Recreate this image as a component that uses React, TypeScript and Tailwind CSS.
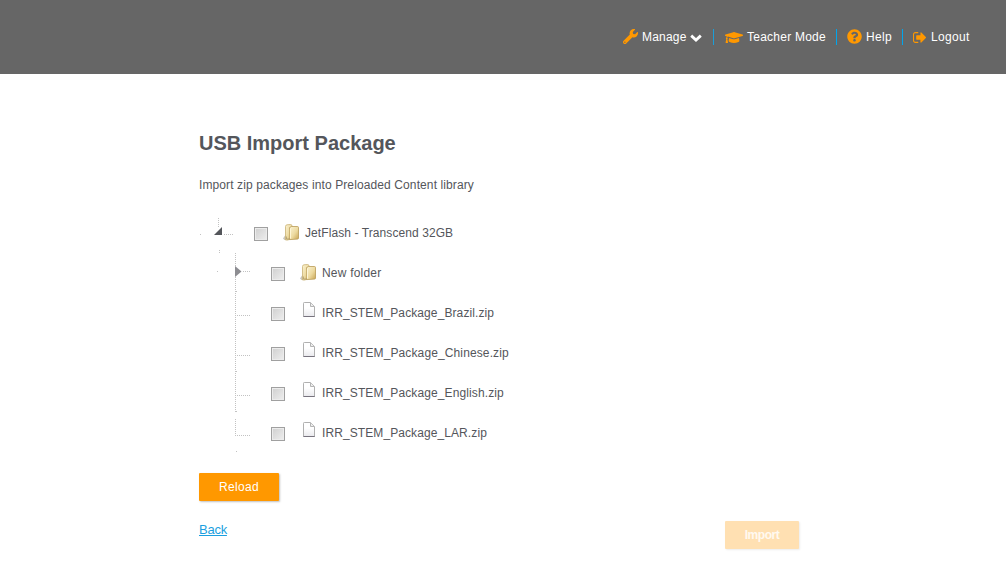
import React from 'react';
import { FaWrench, FaGraduationCap, FaQuestionCircle } from 'react-icons/fa';

type Kind = 'root' | 'folder' | 'file' | 'last';

const rows: { label: string; kind: Kind; tracking: string }[] = [
  { label: 'JetFlash - Transcend 32GB', kind: 'root', tracking: 'tracking-[0.085px]' },
  { label: 'New folder', kind: 'folder', tracking: 'tracking-[0.2px]' },
  { label: 'IRR_STEM_Package_Brazil.zip', kind: 'file', tracking: 'tracking-[0.1px]' },
  { label: 'IRR_STEM_Package_Chinese.zip', kind: 'file', tracking: 'tracking-[0.12px]' },
  { label: 'IRR_STEM_Package_English.zip', kind: 'file', tracking: 'tracking-[0.11px]' },
  { label: 'IRR_STEM_Package_LAR.zip', kind: 'last', tracking: 'tracking-[0.09px]' },
];

function SignOut() {
  return (
    <svg viewBox="0 128 1568 1536" preserveAspectRatio="none" className="h-[13px] w-[13px] shrink-0" fill="currentColor">
      <path d="M640 1440q0 4 1 20t.5 26.5-3 23.5-10 19.5-20.5 6.5h-320q-119 0-203.5-84.5t-84.5-203.5v-704q0-119 84.5-203.5t203.5-84.5h320q13 0 22.5 9.5t9.5 22.5q0 4 1 20t.5 26.5-3 23.5-10 19.5-20.5 6.5h-320q-66 0-113 47t-47 113v704q0 66 47 113t113 47h312l11.5 1 11.5 3 8 5.5 7 9 2 13.5zm928-544q0 26-19 45l-544 544q-19 19-45 19t-45-19-19-45v-288h-448q-26 0-45-19t-19-45v-384q0-26 19-45t45-19h448v-288q0-26 19-45t45-19 45 19l544 544q19 19 19 45z" />
    </svg>
  );
}

function Chevron() {
  return (
    <svg width="12" height="8" viewBox="0 0 12 8" className="ml-[3px] mt-px shrink-0" fill="none">
      <path d="M1.2 1.6L6 6l4.8-4.4" stroke="#fff" strokeWidth="2.8" />
    </svg>
  );
}

function Connector({ kind }: { kind: Kind }) {
  const dots = { stroke: '#c2c2c2', strokeWidth: 1, strokeDasharray: '1 1' };
  return (
    <svg width="55" height="40" viewBox="0 0 55 40" className="shrink-0" fill="none" shapeRendering="crispEdges">
      {kind === 'root' && (
        <>
          <path d="M19.5 5v10M1 21.5h1M25 21.5h9M20.5 37v3" {...dots} />
          <path d="M23 14v8h-8z" fill="#54565b" shapeRendering="auto" />
        </>
      )}
      {kind === 'folder' && (
        <>
          <path d="M19.5 0v40M1 18.5h1M27 18.5h8M20.5 38v1" {...dots} />
          <path d="M19 13l6.5 5.5L19 24z" fill="#8d8d92" shapeRendering="auto" />
        </>
      )}
      {kind === 'file' && <path d="M19.5 0v40M21 22.5h14M20.5 38v1" {...dots} />}
      {kind === 'last' && <path d="M19.5 6v16M19 22.5h16M20.5 38v1" {...dots} />}
    </svg>
  );
}

function Folder() {
  return (
    <svg width="16" height="17" viewBox="0 0 16 17" className="mb-[2px] ml-[-1px]">
      <defs>
        <linearGradient id="gold" x1="0" y1="0" x2="1" y2="1">
          <stop offset="0" stopColor="#fbf3d3" />
          <stop offset="0.55" stopColor="#eddaa0" />
          <stop offset="1" stopColor="#c8a454" />
        </linearGradient>
      </defs>
      <path d="M0 14.5l2-3h2v4.5H1.5z" fill="#c9c6bd" />
      <path d="M2.5 2.5Q2.5 1 4 .8L7.5.5Q9 .5 9 2v12l-4 2H2.5z" fill="url(#gold)" stroke="#c9b173" strokeWidth=".8" />
      <path d="M6.5 3.6l2-1.1h6q1 0 1 1.2v10.4q0 .9-1 1l-8 .5z" fill="url(#gold)" stroke="#b99a55" strokeWidth=".8" />
      <path d="M7.4 4.5v10" stroke="#fff8dc" />
      <path d="M3.5 12.5v2.5h3" fill="none" stroke="#9a8a60" strokeWidth=".6" />
    </svg>
  );
}

function Page() {
  return (
    <svg width="13" height="16" viewBox="0 0 13 16" className="mb-[6px] ml-[2px]">
      <defs>
        <linearGradient id="paper" x1="0" y1="0" x2="0" y2="1">
          <stop offset=".4" stopColor="#fff" />
          <stop offset="1" stopColor="#e9e9ed" />
        </linearGradient>
      </defs>
      <path d="M.5 1.3Q.5.5 1.3.5H7.5L11.5 4.5V14.5H.5z" fill="url(#paper)" stroke="#b0b0b0" />
      <path d="M7.5.8v3.7h3.7" fill="#eee" stroke="#b5b5b5" />
      <path d="M.5 14.5h11.2" stroke="#77737e" />
    </svg>
  );
}

export default function App() {
  return (
    <div className="flex h-[588px] w-[1006px] flex-col overflow-hidden bg-white font-['Liberation_Sans',Arial,sans-serif] text-[12px] text-[#54565b]">
      <header className="flex h-[74px] shrink-0 bg-[#666] pl-[623px] text-white">
        <nav className="flex h-[74px] items-center">
          <a className="flex w-[90px] items-center">
            <FaWrench className="mb-px mr-1 size-[15px] shrink-0 text-[#ff9800]" />
            <span className="tracking-[0.2px]">Manage</span>
            <Chevron />
          </a>
          <a className="flex h-4 w-[123px] items-center border-l border-[#1b9fd9] pl-[11px]">
            <FaGraduationCap className="mr-1 h-[15px] w-[18px] shrink-0 text-[#ff9800]" />
            <span className="whitespace-nowrap tracking-[0.24px]">Teacher Mode</span>
          </a>
          <a className="flex h-4 w-[66px] items-center border-l border-[#00a5ec] pl-[10px]">
            <FaQuestionCircle className="mb-[2px] mr-1 size-[15px] shrink-0 text-[#ff9800]" />
            <span className="tracking-[0.3px]">Help</span>
          </a>
          <a className="flex h-4 items-center border-l border-[#00a5ec] pl-[10px]">
            <span className="mr-[5px] text-[#ff9800]"><SignOut /></span>
            <span className="tracking-[0.35px]">Logout</span>
          </a>
        </nav>
      </header>
      <main className="ml-[199px] flex w-[600px] flex-col pt-[57px]">
        <h1 className="h-6 text-[20px] font-bold leading-6">USB Import Package</h1>
        <p className="mt-[22px] h-4 leading-4 tracking-[0.11px]">Import zip packages into Preloaded Content library</p>
        <ul className="mt-5">
          {rows.map(({ label, kind, tracking }) => (
            <li key={label} className={kind === 'root' ? 'flex h-10 items-center' : 'ml-[17px] flex h-10 items-center'}>
              <Connector kind={kind} />
              <span className="mr-4 mt-[2px] flex size-[14px] shrink-0 border border-[#a0a0a0] bg-[#ececec] p-px">
                <span className="flex-1 bg-linear-to-br from-[#d2d2d2] to-[#ececec]" />
              </span>
              <span className="flex w-[21px] shrink-0">
                {kind === 'root' || kind === 'folder' ? <Folder /> : <Page />}
              </span>
              <span className={`whitespace-nowrap ${tracking}`}>{label}</span>
            </li>
          ))}
        </ul>
        <button className="mt-5 h-7 w-20 rounded-[1px] bg-[#ff9800] text-[12px] leading-7 tracking-[0.35px] text-white shadow-[1px_1px_2px_rgba(0,0,0,0.25)]">Reload</button>
        <div className="mt-5 flex justify-between">
          <a className="mt-px h-4 text-[13px] leading-4 tracking-[-0.25px] text-[#1b9fe0] underline">Back</a>
          <button className="h-7 w-[74px] rounded-[1px] bg-[#ffe0b2] text-[12px] font-bold leading-7 tracking-[-0.45px] text-white/80 shadow-[1px_1px_2px_rgba(0,0,0,0.08)]">Import</button>
        </div>
      </main>
    </div>
  );
}
